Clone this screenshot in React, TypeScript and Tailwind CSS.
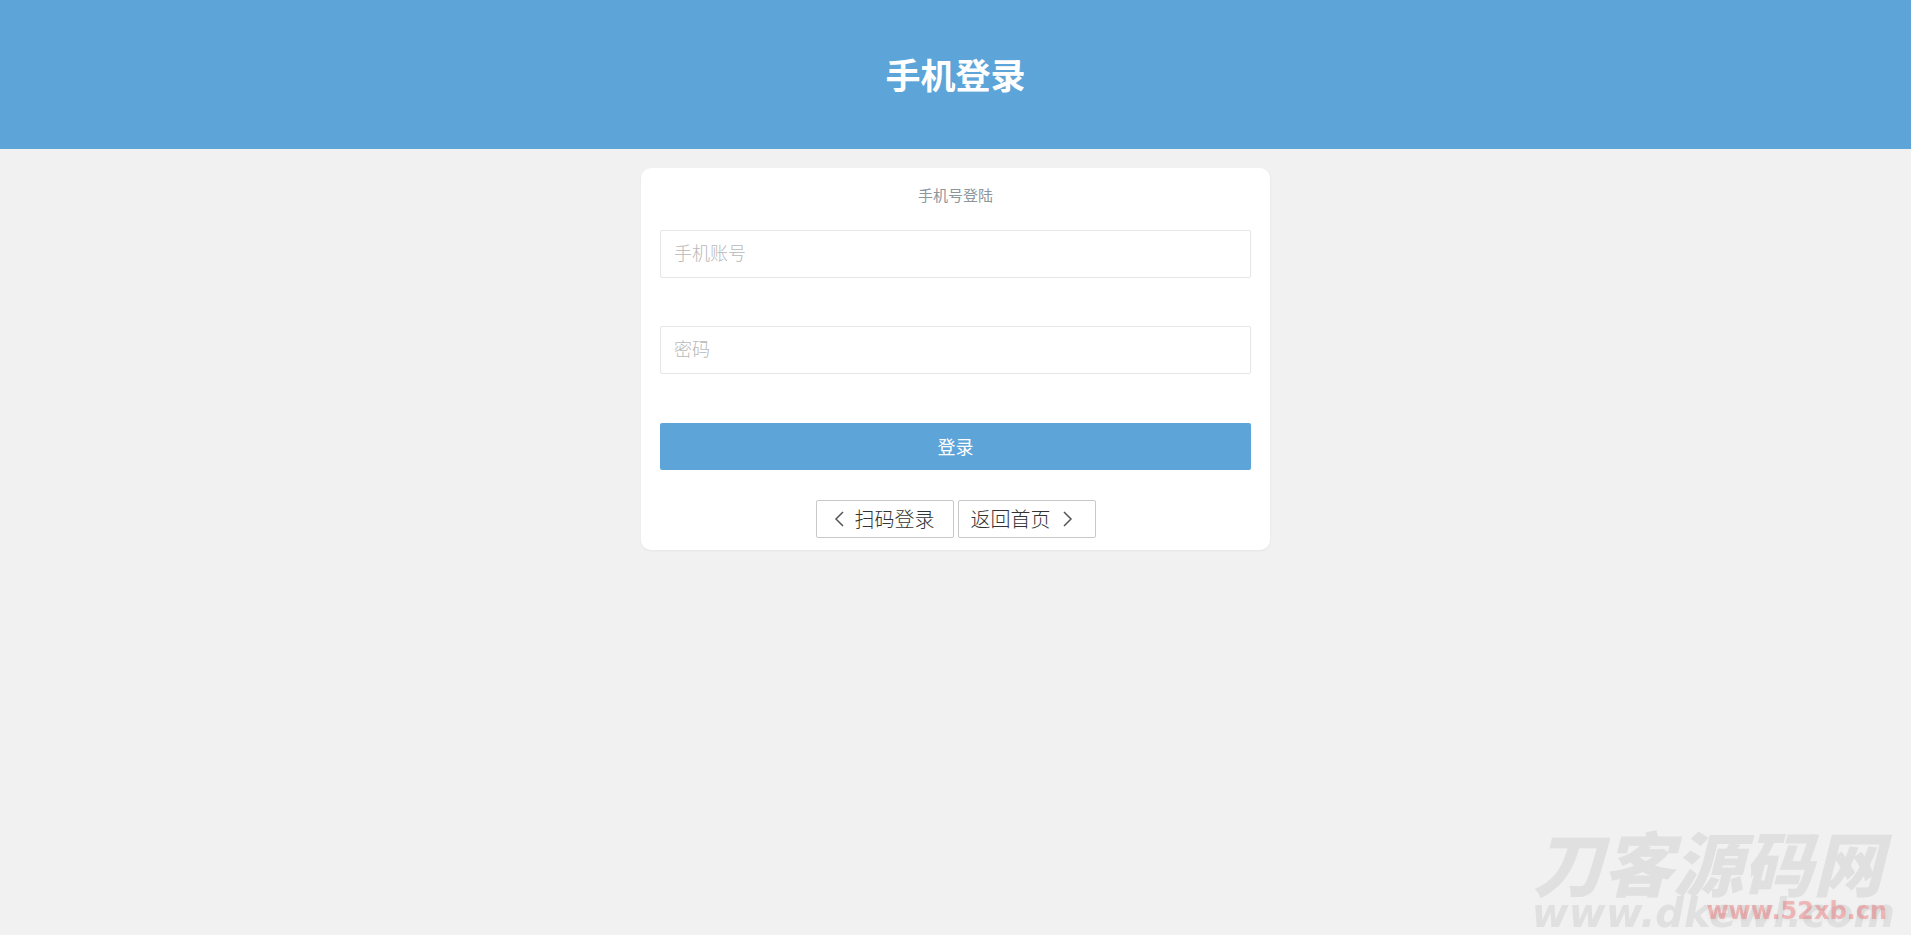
import { useState } from "react";

const Header = () => (
  <header className="bg-[#5da4d8] pt-12 pb-[49px]">
    <h1 className="text-center text-[35px] leading-[52px] font-bold text-white">手机登录</h1>
  </header>
);

const Field = ({ label, name, type }: { label: string; name: string; type: string }) => {
  const [value, setValue] = useState("");

  return (
    <input
      type={type}
      name={name}
      aria-label={label}
      placeholder={label}
      value={value}
      onChange={(e) => setValue(e.target.value)}
      className="mb-12 block h-12 w-full rounded-xs border border-[#e6e6e6] bg-white px-[13px] pb-1 text-lg font-light text-[#333] outline-none placeholder:text-[#b8b8b8] focus:border-[#c9c9c9]"
    />
  );
};

const LoginCard = () => (
  <main className="mx-auto mt-[19px] w-full max-w-[629px] rounded-[10px] bg-white px-[19px] pt-[15px] pb-3 shadow-[0_1px_3px_rgba(0,0,0,0.05)]">
    <form onSubmit={(e) => e.preventDefault()}>
      <p className="mb-[23px] text-center text-[15px] leading-6 text-[#8d969d]">手机号登陆</p>
      <Field label="手机账号" name="phone" type="text" />
      <Field label="密码" name="password" type="password" />
      <button type="submit" className="mt-[49px] block h-[47px] w-full cursor-pointer rounded-xs bg-[#5da4d8] pb-0.5 text-lg text-white hover:opacity-80">
        登录
      </button>
    </form>
    <nav className="mt-[30px] flex justify-center gap-1">
      <a href="#scan" className="flex h-[38px] w-[138px] items-center rounded-xs border border-[#c9c9c9] pl-3 text-xl font-light text-[#333] hover:border-[#5da4d8]">
        <svg viewBox="0 0 20 20" className="mr-1.5 size-5" fill="none" stroke="#555" strokeWidth="1.5" aria-hidden="true">
          <path d="M14 3 L7 10 L14 17" />
        </svg>
        扫码登录
      </a>
      <a href="#home" className="flex h-[38px] w-[138px] items-center rounded-xs border border-[#c9c9c9] pl-3 text-xl font-light text-[#333] hover:border-[#5da4d8]">
        返回首页
        <svg viewBox="0 0 20 20" className="ml-1.5 size-5" fill="none" stroke="#555" strokeWidth="1.5" aria-hidden="true">
          <path d="M7 3 L14 10 L7 17" />
        </svg>
      </a>
    </nav>
  </main>
);

const Watermark = () => (
  <div className="pointer-events-none fixed right-4 bottom-0 select-none text-[#e0e0e0]">
    <p className="pr-3 text-right text-[70px] leading-[60px] font-black italic">刀客源码网</p>
    <p className="text-right font-['DejaVu_Sans',sans-serif] text-[40px] leading-11 font-bold italic">www.dkewl.com</p>
    <p className="absolute right-2 bottom-2 font-['DejaVu_Sans',sans-serif] text-2xl leading-8 font-bold text-[#f06464]/40 text-shadow-[0_1px_4px_rgba(0,0,0,0.06)]">
      www.52xb.cn
    </p>
  </div>
);

const App = () => {
  return (
    <div className="min-h-screen bg-[#f1f1f1] font-['Noto_Sans_CJK_SC',sans-serif]">
      <Header />
      <LoginCard />
      <Watermark />
    </div>
  );
};

export default App;
